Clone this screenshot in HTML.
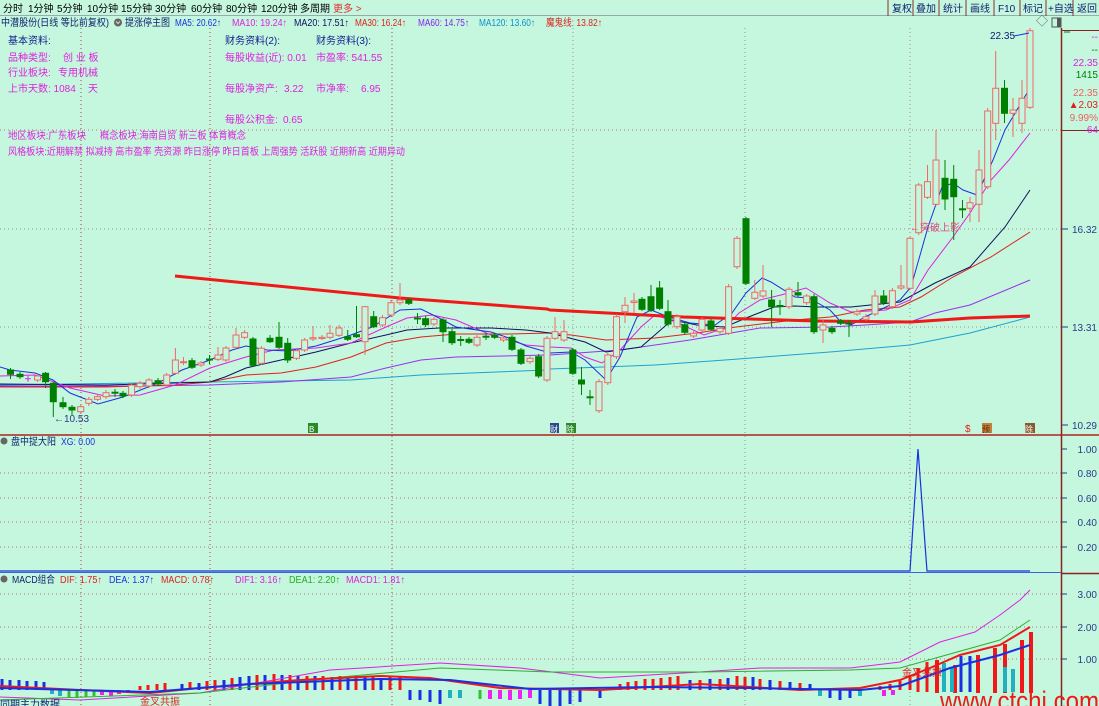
<!DOCTYPE html>
<html><head><meta charset="utf-8"><style>
html,body{margin:0;padding:0;background:#c4f7dd;}
svg{display:block;font-family:"Liberation Sans","Noto Sans CJK SC",sans-serif;}
</style></head><body>
<svg width="1099" height="706" viewBox="0 0 1099 706" xmlns="http://www.w3.org/2000/svg">
<rect width="1099" height="706" fill="#c4f7dd"/>
<!-- toolbar -->
<line x1="0" y1="15.5" x2="1099" y2="15.5" stroke="#9aa" />
<g font-size="10" fill="#000">
<text x="3" y="12">分时</text><text x="28" y="12">1分钟</text><text x="57" y="12">5分钟</text><text x="87" y="12">10分钟</text><text x="121" y="12">15分钟</text><text x="155" y="12">30分钟</text><text x="191" y="12">60分钟</text><text x="226" y="12">80分钟</text><text x="261" y="12">120分钟</text><text x="300" y="12">多周期</text><text x="333" y="12" fill="#e03030">更多 &gt;</text>
</g>
<g stroke="#8a3030" fill="none"><path d="M888 0V16 M913 0V16 M939 0V16 M966 0V16 M994 0V16 M1020 0V16 M1046 0V16 M1073 0V16"/></g>
<g font-size="10" fill="#102070">
<text x="892" y="12">复权</text><text x="916" y="12">叠加</text><text x="943" y="12">统计</text><text x="970" y="12">画线</text><text x="998" y="12">F10</text><text x="1023" y="12">标记</text><text x="1048" y="12">+自选</text><text x="1077" y="12">返回</text>
</g>
<!-- title row -->
<g font-size="10" lengthAdjust="spacingAndGlyphs">
<text x="1" y="26" fill="#102070" textLength="108" lengthAdjust="spacingAndGlyphs">中潜股份(日线 等比前复权)</text>
<circle cx="118" cy="22.5" r="4" fill="#666"/><path d="M116 21.5l2 2 2-2" stroke="#ddd" fill="none"/>
<text x="125" y="26" fill="#102070" textLength="45" lengthAdjust="spacingAndGlyphs">提涨停主图</text>
<text x="175" y="26" fill="#1a30e0" textLength="46" lengthAdjust="spacingAndGlyphs">MA5: 20.62↑</text>
<text x="232" y="26" fill="#e020e0" textLength="55" lengthAdjust="spacingAndGlyphs">MA10: 19.24↑</text>
<text x="294" y="26" fill="#101060" textLength="55" lengthAdjust="spacingAndGlyphs">MA20: 17.51↑</text>
<text x="355" y="26" fill="#e02020" textLength="51" lengthAdjust="spacingAndGlyphs">MA30: 16.24↑</text>
<text x="418" y="26" fill="#8a20f0" textLength="51" lengthAdjust="spacingAndGlyphs">MA60: 14.75↑</text>
<text x="479" y="26" fill="#1090d0" textLength="56" lengthAdjust="spacingAndGlyphs">MA120: 13.60↑</text>
<text x="546" y="26" fill="#e02020" textLength="56" lengthAdjust="spacingAndGlyphs">魔鬼线: 13.82↑</text>
</g>
<text x="1036" y="25" font-size="12" fill="#666">◇</text>
<rect x="1052" y="18" width="9" height="9" fill="none" stroke="#555"/><rect x="1057" y="18" width="4" height="9" fill="#555"/>
<!-- right panel -->
<line x1="1061.5" y1="28" x2="1061.5" y2="706" stroke="#8a2020" stroke-width="1.5"/>
<line x1="1062" y1="30.5" x2="1099" y2="30.5" stroke="#8a2020"/>
<line x1="1062" y1="130.5" x2="1099" y2="130.5" stroke="#8a2020"/>
<line x1="1064" y1="32" x2="1070" y2="32" stroke="#008000"/>
<g font-size="10" text-anchor="end">
<text x="1098" y="40" fill="#e020e0">--</text>
<text x="1098" y="53" fill="#008000">--</text>
<text x="1098" y="66" fill="#e020e0">22.35</text>
<text x="1098" y="78" fill="#008000">1415</text>
<text x="1098" y="96" fill="#f06060">22.35</text>
<text x="1098" y="108" fill="#e02020">▲2.03</text>
<text x="1098" y="121" fill="#f06060">9.99%</text>
<text x="1098" y="133" fill="#e020e0">64</text>
<text x="1097" y="233" fill="#2a3a8a">16.32</text>
<text x="1097" y="331" fill="#2a3a8a">13.31</text>
<text x="1097" y="429" fill="#2a3a8a">10.29</text>
<text x="1097" y="453" fill="#2a3a8a">1.00</text>
<text x="1097" y="477" fill="#2a3a8a">0.80</text>
<text x="1097" y="502" fill="#2a3a8a">0.60</text>
<text x="1097" y="526" fill="#2a3a8a">0.40</text>
<text x="1097" y="551" fill="#2a3a8a">0.20</text>
<text x="1097" y="598" fill="#2a3a8a">3.00</text>
<text x="1097" y="631" fill="#2a3a8a">2.00</text>
<text x="1097" y="663" fill="#2a3a8a">1.00</text>
</g>
<path d="M1062 229h6M1062 327h6M1062 425h6M1062 449h5M1062 473h5M1062 498h5M1062 522h5M1062 547h5M1062 594h5M1062 627h5M1062 659h5" stroke="#2a3a8a"/>
<!-- grids -->
<g stroke="#b04040" stroke-dasharray="1,3" stroke-width="1">
<path d="M81 28V706 M210 28V706 M392 28V706"/>
<path d="M0 130H1061 M0 473H1061 M0 498H1061 M0 522H1061 M0 547H1061 M0 594H1061 M0 627H1061 M0 659H1061" stroke="#c07070"/>
</g>
<g stroke="#a09090" stroke-dasharray="1,3"><path d="M573 28V706 M745 28V706 M910 28V706 M0 229H1061 M0 327H1061"/></g>
<!-- info text -->
<g font-size="10" fill="#e020e0">
<text x="8" y="44" fill="#102090">基本资料:</text>
<text x="8" y="61">品种类型:</text><text x="63" y="61">创 业 板</text>
<text x="8" y="76">行业板块:</text><text x="58" y="76">专用机械</text>
<text x="8" y="92">上市天数: 1084</text><text x="88" y="92">天</text>
<text x="225" y="44" fill="#102090">财务资料(2):</text>
<text x="316" y="44" fill="#102090">财务资料(3):</text>
<text x="225" y="61">每股收益(近): 0.01</text>
<text x="316" y="61">市盈率: 541.55</text>
<text x="225" y="92">每股净资产:</text><text x="284" y="92">3.22</text>
<text x="316" y="92">市净率:</text><text x="361" y="92">6.95</text>
<text x="225" y="123">每股公积金:</text><text x="283" y="123">0.65</text>
<text x="8" y="139" textLength="78" lengthAdjust="spacingAndGlyphs">地区板块:广东板块</text><text x="100" y="139" textLength="146" lengthAdjust="spacingAndGlyphs">概念板块:海南自贸 新三板 体育概念</text>
<text x="8" y="155" textLength="397" lengthAdjust="spacingAndGlyphs">风格板块:近期解禁 拟减持 高市盈率 壳资源 昨日涨停 昨日首板 上周强势 活跃股 近期新高 近期异动</text>
</g>
<!-- moving averages -->
<g fill="none" stroke-width="1">
<polyline stroke="#20a0d0" points="0,385 210,382 351,380 421,375 547,370 550,369 655,365 725,360 830,352 910,345 970,333 1030,317"/>
<polyline stroke="#9a30f0" points="0,386 140,386 210,385 281,382 351,377 386,368 421,360 456,357 547,355 550,355 620,350 690,340 760,328 830,327 865,325 910,322 935,313 970,305 1030,280"/>
<polyline stroke="#e02020" points="0,387 105,387 175,385 210,382 246,375 281,373 316,367 351,357 386,343 421,337 456,334 509,334 550,333 571,335 606,340 655,338 697,333 736,327 795,320 830,317 865,310 900,307 921,297 953,277 991,257 1030,232"/>
<polyline stroke="#101060" points="0,384 105,385 175,383 210,382 225,377 246,368 281,360 316,352 351,343 386,335 407,330 439,328 491,328 526,330 550,333 585,342 606,352 641,347 672,320 697,325 725,327 746,318 774,307 795,306 816,307 851,307 900,302 935,283 970,267 1005,227 1030,190"/>
<polyline stroke="#e020e0" points="0,376 35,375 70,388 105,396 140,395 175,385 210,368 246,357 274,350 316,348 351,343 386,327 407,318 432,315 456,320 491,335 526,345 550,347 571,348 585,357 602,363 620,350 641,327 655,315 676,322 704,335 725,328 739,313 760,300 781,295 806,288 830,303 851,312 886,310 910,300 928,270 953,237 970,213 991,180 1009,160 1030,133"/>
<polyline stroke="#1a30e0" points="0,367 10,370 35,373 53,380 70,393 98,404 123,397 158,383 182,370 210,360 232,350 246,346 267,350 288,351 316,346 351,335 372,327 400,310 421,309 439,318 456,327 491,332 509,338 526,346 550,353 571,352 585,360 606,380 620,357 637,317 651,310 669,317 690,323 715,325 732,313 746,293 762,278 771,282 795,297 809,298 830,310 841,322 851,325 865,317 886,307 900,300 911,287 928,227 942,187 953,183 963,190 977,195 993,160 1005,130 1030,88"/>
</g>
<!-- thick trend line -->
<polyline fill="none" stroke="#f01818" stroke-width="3" points="175,276 400,298 547,309 550,310 683,317 816,321 911,322 970,318 1030,316"/>
<!-- red candles -->
<g stroke="#f06868" fill="#c4f7dd" stroke-width="1">
<path fill="none" d="M37.5 374V382M80.7 404V414M88.8 397V406M97.5 394V401M106 390V399M131.6 383V397M140 381V389M149 378V388M166.7 373V387M175.4 348V375M183.5 357V365M201 361V367M218 347V361M226 346V362M236 328V349M244.6 330V339M261.4 346V365M296.5 348V360M304.6 338V352M313 326V341M322 335V340M330 325V339M339 325V337M365 306V355M382.5 315V327M391 300V317M400 283V305M434 317V326M477 335V347M503.5 336V342M530 356V364M547 336V382M555 317V340M564 320V342M599 379V413M607.8 353V385M616.5 314V359M625 297V323M634 293V313M677 314V329M693.6 331V338M702 317V332M720 326V334M728.6 284V335M737 236V269M754.8 280V300M763 265V298M789 287V309M806.6 294V305M823 320V343M857 309V316M866 314V321M875 290V316M892.4 288V309M901 265V290M910 236V290M918.7 183V235M927.5 165V199M936 130V206M970 197V222M979 150V222M987.7 108V189M995.7 51V140M1013 98V137M1022 80V133M1030 28V109"/>
<rect x="34.5" y="376" width="6" height="4"/><rect x="77.7" y="406.7" width="6" height="5"/><rect x="85.8" y="399.3" width="6" height="4"/><rect x="94.5" y="396.7" width="6" height="2.6"/><rect x="103" y="392.7" width="6" height="4"/><rect x="128.6" y="385" width="6" height="10"/><rect x="137" y="383.3" width="6" height="3.4"/><rect x="146" y="380" width="6" height="6"/><rect x="163.7" y="375" width="6" height="10"/><rect x="172.4" y="360" width="6" height="13.3"/><rect x="180.5" y="361.7" width="6" height="1"/><rect x="198" y="363" width="6" height="2"/><rect x="215" y="355" width="6" height="4.3"/><rect x="223" y="348" width="6" height="12"/><rect x="233" y="335" width="6" height="12.3"/><rect x="241.6" y="332.7" width="6" height="4.6"/><rect x="258.4" y="348.3" width="6" height="15"/><rect x="293.5" y="350.7" width="6" height="7.6"/><rect x="301.6" y="340" width="6" height="10"/><rect x="310" y="337.7" width="6" height="1.3"/><rect x="319" y="337.3" width="6" height="1.2"/><rect x="327" y="333.3" width="6" height="4"/><rect x="336" y="328" width="6" height="7.3"/><rect x="362" y="306.7" width="6" height="35"/><rect x="379.5" y="317.7" width="6" height="7.3"/><rect x="388" y="302.7" width="6" height="12.3"/><rect x="397" y="300" width="6" height="2.7"/><rect x="431" y="319.3" width="6" height="4.7"/><rect x="474" y="337.3" width="6" height="7.7"/><rect x="500.5" y="338" width="6" height="2"/><rect x="527" y="358.3" width="6" height="3.4"/><rect x="544" y="338.3" width="6" height="41.7"/><rect x="552" y="331.7" width="6" height="6.6"/><rect x="561" y="331.7" width="6" height="8.3"/><rect x="596" y="381.7" width="6" height="29"/><rect x="604.8" y="355" width="6" height="27.7"/><rect x="613.5" y="316.7" width="6" height="40"/><rect x="622" y="305.3" width="6" height="6.4"/><rect x="631" y="301" width="6" height="1.5"/><rect x="674" y="316.7" width="6" height="10"/><rect x="690.6" y="333.3" width="6" height="2.7"/><rect x="699" y="319.3" width="6" height="10.7"/><rect x="717" y="328.3" width="6" height="3.4"/><rect x="725.6" y="286.7" width="6" height="46.6"/><rect x="734" y="238.3" width="6" height="28.4"/><rect x="751.8" y="292.3" width="6" height="6"/><rect x="760" y="291" width="6" height="5"/><rect x="786" y="289.3" width="6" height="17.4"/><rect x="803.6" y="296" width="6" height="6.7"/><rect x="820" y="325" width="6" height="5"/><rect x="854" y="311.7" width="6" height="2.3"/><rect x="863" y="316.7" width="6" height="2.6"/><rect x="872" y="296" width="6" height="18"/><rect x="889.4" y="290.7" width="6" height="16"/><rect x="898" y="286" width="6" height="2"/><rect x="907" y="238.3" width="6" height="50"/><rect x="915.7" y="185" width="6" height="47.7"/><rect x="924.5" y="181.7" width="6" height="15.6"/><rect x="933" y="160" width="6" height="44.3"/><rect x="967" y="202.7" width="6" height="5.6"/><rect x="976" y="170" width="6" height="34.3"/><rect x="984.7" y="111" width="6" height="75.7"/><rect x="992.7" y="88.3" width="6" height="35"/><rect x="1010" y="110" width="6" height="3.3"/><rect x="1019" y="98.3" width="6" height="25"/><rect x="1027" y="30.7" width="6" height="76.6"/>
</g>
<!-- green candles -->
<g stroke="#008000" fill="#008000">
<path fill="none" d="M10.5 368V379M20 372V379M45.6 372V388M53.3 382V417M63 397V409M72 405V415M115 389V397M123 391V398M158 378V386M192 358V369M209.5 355V364M253 337V367M270 335V343M279 322V349M287.7 338V363M347.7 330V341M356.5 306V338M373.7 311V328M408.8 298V305M417.5 313V324M425.6 316V327M443 318V342M452 329V345M460.7 336V346M469 337V344M486 333V340M494.7 333V339M512 335V351M521 348V365M538.6 354V378M572.8 348V375M581.5 367V395M590 390V405M642 297V311M651 285V312M659.6 281V310M668 300V326M684.8 322V334M711 319V331M746 217V285M771.6 290V327M780 300V315M798 282V297M814 294V334M832 326V334M840.6 319V325M849 320V337M883.7 290V305M945 160V210M953.7 165V240M962.5 200V218M1004.5 80V123"/>
<rect x="7.5" y="370" width="6" height="4.3"/><rect x="17" y="374.3" width="6" height="2.4"/><rect x="42.6" y="373.3" width="6" height="8.4"/><rect x="50.3" y="383.3" width="6" height="18.4"/><rect x="60" y="402.7" width="6" height="4"/><rect x="69" y="407.3" width="6" height="2.7"/><rect x="112" y="392.2" width="6" height="1"/><rect x="120" y="393.3" width="6" height="2.7"/><rect x="155" y="380.7" width="6" height="3.3"/><rect x="189" y="360.7" width="6" height="6.6"/><rect x="206.5" y="359" width="6" height="1"/><rect x="250" y="339" width="6" height="26.3"/><rect x="267" y="338.3" width="6" height="3.4"/><rect x="276" y="337.3" width="6" height="10"/><rect x="284.7" y="343.3" width="6" height="16.7"/><rect x="344.7" y="336.7" width="6" height="2.6"/><rect x="353.5" y="334.7" width="6" height="2"/><rect x="370.7" y="316.7" width="6" height="10"/><rect x="405.8" y="300" width="6" height="3.3"/><rect x="414.5" y="318" width="6" height="1"/><rect x="422.6" y="318.7" width="6" height="6"/><rect x="440" y="320" width="6" height="11.7"/><rect x="449" y="331.7" width="6" height="11"/><rect x="457.7" y="339.5" width="6" height="1"/><rect x="466" y="339.3" width="6" height="3"/><rect x="483" y="336.2" width="6" height="1"/><rect x="491.7" y="335.3" width="6" height="2"/><rect x="509" y="337.3" width="6" height="12"/><rect x="518" y="350" width="6" height="13.3"/><rect x="535.6" y="356.7" width="6" height="19.3"/><rect x="569.8" y="350" width="6" height="23.3"/><rect x="578.5" y="380" width="6" height="4"/><rect x="587" y="396.8" width="6" height="1"/><rect x="639" y="299.3" width="6" height="10"/><rect x="648" y="296.7" width="6" height="13.3"/><rect x="656.6" y="288" width="6" height="20.3"/><rect x="665" y="311.7" width="6" height="12.3"/><rect x="681.8" y="324.7" width="6" height="7.6"/><rect x="708" y="321" width="6" height="8.3"/><rect x="743" y="218.7" width="6" height="64.6"/><rect x="768.6" y="300" width="6" height="6.7"/><rect x="777" y="305.5" width="6" height="1"/><rect x="795" y="292.7" width="6" height="2.3"/><rect x="811" y="296.7" width="6" height="35"/><rect x="829" y="328.3" width="6" height="3.4"/><rect x="837.6" y="321" width="6" height="2.3"/><rect x="846" y="323" width="6" height="1"/><rect x="880.7" y="296" width="6" height="6.7"/><rect x="942" y="178.3" width="6" height="20.7"/><rect x="950.7" y="179.3" width="6" height="17.4"/><rect x="959.5" y="208.8" width="6" height="1"/><rect x="1001.5" y="88.3" width="6" height="25"/>
</g>
<path d="M25 378.7h6M28 375.7v6" stroke="#e020e0"/>
<!-- annotations -->
<text x="54" y="422" font-size="10" fill="#2a3a8a">←10.53</text>
<text x="990" y="39" font-size="10" fill="#102070">22.35</text>
<line x1="1014" y1="36" x2="1029" y2="33" stroke="#1a30e0"/>
<text x="910" y="231" font-size="10" fill="#e04080">←突破上影</text>
<rect x="308" y="423" width="10" height="10" fill="#2a8a2a"/><text x="309" y="432" font-size="8" fill="#fff">B</text>
<rect x="550" y="423" width="9" height="10" fill="#2a4a8a"/><text x="550" y="432" font-size="8" fill="#fff">财</text>
<rect x="566" y="423" width="10" height="10" fill="#2a8a2a"/><text x="566" y="432" font-size="8" fill="#fff">除</text>
<text x="965" y="432" font-size="10" fill="#e02020">$</text>
<rect x="982" y="423" width="10" height="10" fill="#c08040"/><text x="982" y="432" font-size="8" fill="#5a2a00">预</text>
<rect x="1025" y="423" width="10" height="10" fill="#8a5a30"/><text x="1025" y="432" font-size="8" fill="#fff">除</text>
<!-- XG panel -->
<line x1="0" y1="435" x2="1099" y2="435" stroke="#b02020" stroke-width="1.5"/>
<circle cx="4" cy="441" r="3.5" fill="#666"/>
<text x="11" y="445" font-size="10" fill="#102070" textLength="45" lengthAdjust="spacingAndGlyphs">盘中捉大阳</text>
<text x="61" y="445" font-size="10" fill="#1a30e0" textLength="34" lengthAdjust="spacingAndGlyphs">XG: 0.00</text>
<polyline fill="none" stroke="#1a30e0" stroke-width="1.2" points="0,571 910,571 918,449 927,571 1030,571"/>
<line x1="0" y1="572.5" x2="1061" y2="572.5" stroke="#4060e0"/>
<line x1="1061" y1="573.5" x2="1099" y2="573.5" stroke="#8a2020" stroke-width="1.5"/>
<!-- MACD panel -->
<circle cx="4" cy="579" r="3.5" fill="#666"/>
<g font-size="10">
<text x="12" y="583" fill="#102070" textLength="43" lengthAdjust="spacingAndGlyphs">MACD组合</text>
<text x="60" y="583" fill="#e02020" textLength="42" lengthAdjust="spacingAndGlyphs">DIF: 1.75↑</text>
<text x="109" y="583" fill="#1a30e0" textLength="45" lengthAdjust="spacingAndGlyphs">DEA: 1.37↑</text>
<text x="161" y="583" fill="#e02020" textLength="53" lengthAdjust="spacingAndGlyphs">MACD: 0.78↑</text>
<text x="235" y="583" fill="#e020e0" textLength="47" lengthAdjust="spacingAndGlyphs">DIF1: 3.16↑</text>
<text x="289" y="583" fill="#20b020" textLength="51" lengthAdjust="spacingAndGlyphs">DEA1: 2.20↑</text>
<text x="346" y="583" fill="#e020e0" textLength="59" lengthAdjust="spacingAndGlyphs">MACD1: 1.81↑</text>
</g>
<g fill="none" stroke-width="3">
<path stroke="#f01818" d="M140 686V690M148 685V690M157 684V690M165 683V690M190 682V690M207 681V690M215 680V690M232 678V690M257 675V690M274 674V690M290 675V690M307 676V690M323 676V690M340 676V690M356 676V690M373 677V690M390 677V690M400 676V690M620 684V690M628 682V690M636 681V690M645 679V690M653 679V690M661 678V690M670 677V690M678 676V690M700 680V690M720 679V690M737 676V690M745 677V690M760 679V690M780 681V690M800 683V690M870 688V690M880 686V690M890 684V690M900 681V690M910 675V690M918 668V692M927 662V692"/>
<path stroke="#f01818" stroke-width="4" d="M937 660V693M955 665V693M978 655V693M995 648V693M1005 644V693M1022 640V693M1031 632V693"/>
<path stroke="#1a30e0" d="M2 679V690M10 680V690M19 680V690M27 681V690M36 681V690M44 682V690M182 684V690M199 683V690M224 680V690M240 677V690M249 676V690M265 675V690M282 675V690M298 676V690M315 676V690M332 677V690M348 677V690M365 677V690M381 678V690M410 690V700M420 690V700M430 690V702M440 690V704M540 690V704M550 690V706M560 690V706M570 690V704M580 690V702M600 690V698M690 680V690M710 679V690M728 678V690M753 677V690M770 680V690M790 682V690M810 684V690M830 690V698M840 690V700M850 690V698M961 656V692M970 656V692"/>
<path stroke="#20b0c0" stroke-width="4" d="M52 690V694M60 690V696M450 690V698M460 690V698M820 690V696M860 690V696M944 663V692M952 667V692M1005 667V692M1013 669V692"/>
<path stroke="#30c030" d="M69 690V697M77 690V698M86 690V697M94 690V696M480 690V699"/>
<path stroke="#f020f0" stroke-width="4" d="M102 690V695M111 690V696M119 690V694M128 690V693M490 690V699M500 690V699M510 690V700M520 690V699M530 690V698M884 690V696M893 690V695"/>
</g>
<g fill="none" stroke-width="1">
<polyline stroke="#e020e0" points="0,697 80,700 200,693 330,670 440,663 520,668 600,678 700,672 760,668 850,668 900,662 940,642 975,632 1000,615 1020,600 1030,590"/>
<polyline stroke="#30b030" points="0,700 200,693 330,678 440,668 550,672 700,672 850,670 900,668 950,654 1000,640 1030,620"/>
</g>
<g fill="none" stroke-width="2">
<polyline stroke="#f01818" points="0,686 80,690 150,693 200,688 300,680 380,676 430,678 500,688 600,690 700,684 800,690 860,688 900,680 930,668 960,655 1000,645 1030,627"/>
<polyline stroke="#1a30e0" points="0,688 150,692 250,684 380,679 450,680 530,689 650,687 750,688 860,690 900,686 950,668 1000,655 1030,645"/>
</g>
<text x="140" y="705" font-size="10" fill="#e02020">金叉共振</text>
<text x="902" y="676" font-size="10" fill="#e02020">金叉共振</text>
<text x="0" y="708" font-size="10" fill="#102070">同期主力数据</text>
<text x="940" y="710" font-size="27" fill="#f01818" textLength="159" lengthAdjust="spacingAndGlyphs">www.ctchi.com</text>
</svg>
</body></html>
